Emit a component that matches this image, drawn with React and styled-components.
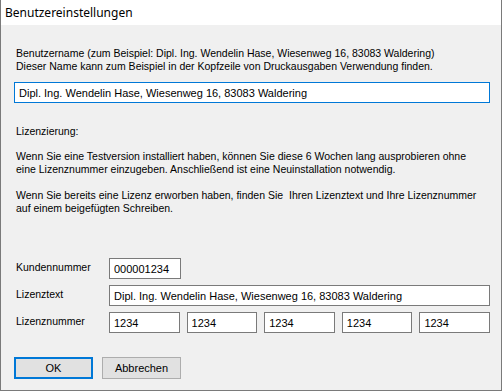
import React from 'react';
import styled, { createGlobalStyle } from 'styled-components';

const GlobalStyle = createGlobalStyle`
  html, body {
    margin: 0;
    padding: 0;
    background: #f0f0f0;
  }
`;

const Window = styled.div`
  width: 502px;
  height: 391px;
  box-sizing: border-box;
  border: 1px solid #7a7a7a;
  border-top: none;
  background: #f0f0f0;
  display: flex;
  flex-direction: column;
  font-family: "Liberation Sans", Arial, sans-serif;
  color: #000;
  overflow: hidden;
`;

const TitleBar = styled.div`
  height: 25px;
  flex: none;
  background: #fff;
  display: flex;
  align-items: center;
  padding-left: 4px;
  font-family: "Noto Sans", "Liberation Sans", sans-serif;
  font-size: 12px;
`;

const Body = styled.div`
  flex: 1;
  display: flex;
  flex-direction: column;
  align-items: stretch;
  padding: 22px 11px 0 15px;
`;

const Text = styled.p`
  margin: ${(p) => p.$mt || 0}px 0 0 0;
  font-size: 10.5px;
  line-height: 13px;
  white-space: nowrap;
`;

const Field = styled.input`
  box-sizing: border-box;
  height: 21px;
  margin: ${(p) => p.$mt || 0}px 0 0 ${(p) => p.$ml || 0}px;
  padding: 0 4px;
  border: 1px solid ${(p) => (p.$focused ? '#0078d7' : '#7a7a7a')};
  background: #fff;
  font-family: "Liberation Sans", Arial, sans-serif;
  font-size: 11px;
  color: #000;
  outline: none;
  width: ${(p) => (p.$w ? `${p.$w}px` : '100%')};
  flex: ${(p) => (p.$grow ? '1 1 0' : 'none')};
  min-width: 0;
`;

const Form = styled.div`
  margin-top: 43px;
  display: grid;
  grid-template-columns: 93px minmax(0, 1fr);
  row-gap: 6px;
  align-items: center;
`;

const Label = styled.span`
  font-size: 10.5px;
  line-height: 13px;
  padding-bottom: 3px;
  white-space: nowrap;
`;

const Boxes = styled.div`
  display: flex;
  gap: 7px;
`;

const Buttons = styled.div`
  display: flex;
  gap: 9px;
  margin-top: 24px;
  margin-left: -2px;
`;

const Button = styled.button`
  box-sizing: border-box;
  width: 79px;
  height: 22px;
  background: #e1e1e1;
  border: ${(p) => (p.$default ? '2px solid #0078d7' : '1px solid #adadad')};
  font-family: "Liberation Sans", Arial, sans-serif;
  font-size: 11px;
  color: #000;
  padding: 0;
`;

const App = () => {
  const code = ['1234', '1234', '1234', '1234', '1234'];

  return (
    <>
      <GlobalStyle />
      <Window>
        <TitleBar>Benutzereinstellungen</TitleBar>
        <Body>
          <Text>
            Benutzername (zum Beispiel: Dipl. Ing. Wendelin Hase, Wiesenweg 16, 83083 Waldering)
            <br />
            Dieser Name kann zum Beispiel in der Kopfzeile von Druckausgaben Verwendung finden.
          </Text>
          <Field
            $focused
            $mt={9}
            $ml={-2}
            style={{ width: 'calc(100% + 2px)' }}
            readOnly
            value="Dipl. Ing. Wendelin Hase, Wiesenweg 16, 83083 Waldering"
          />
          <Text $mt={22}>Lizenzierung:</Text>
          <Text $mt={12}>
            Wenn Sie eine Testversion installiert haben, können Sie diese 6 Wochen lang ausprobieren ohne
            <br />
            eine Lizenznummer einzugeben. Anschließend ist eine Neuinstallation notwendig.
          </Text>
          <Text $mt={13}>
            Wenn Sie bereits eine Lizenz erworben haben, finden Sie &nbsp;Ihren Lizenztext und Ihre Lizenznummer
            <br />
            auf einem beigefügten Schreiben.
          </Text>
          <Form>
            <Label>Kundennummer</Label>
            <div>
              <Field $w={72} readOnly value="000001234" />
            </div>
            <Label>Lizenztext</Label>
            <Field readOnly value="Dipl. Ing. Wendelin Hase, Wiesenweg 16, 83083 Waldering" />
            <Label>Lizenznummer</Label>
            <Boxes>
              {code.map((c, i) => (
                <Field key={i} $grow readOnly value={c} />
              ))}
            </Boxes>
          </Form>
          <Buttons>
            <Button $default>OK</Button>
            <Button>Abbrechen</Button>
          </Buttons>
        </Body>
      </Window>
    </>
  );
};

export default App;
